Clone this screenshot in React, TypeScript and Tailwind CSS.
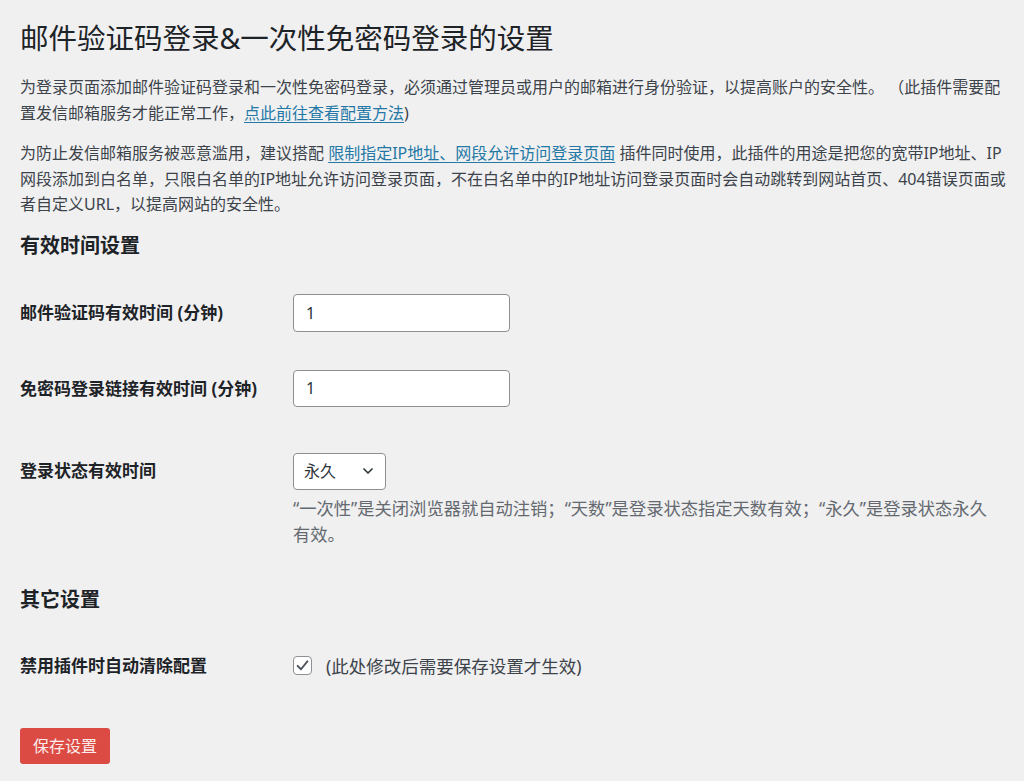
import { ChevronDown } from 'lucide-react';

const font = { fontFamily: '"Noto Sans", "Noto Sans CJK SC", sans-serif' };

const Link = ({ children }: { children: React.ReactNode }) => (
  <a href="#" className="text-[#2478a6] underline underline-offset-[3px] decoration-1">{children}</a>
);

export default function App() {
  return (
    <div style={font} className="min-h-[781px] bg-[#f0f0f1] px-[20px] pt-[20px] text-[#3c434a]">
      <h1 className="text-[28.5px] leading-[36px] font-normal text-[#1d2327] whitespace-nowrap">邮件验证码登录&amp;一次性免密码登录的设置</h1>

      <p className="mt-[19px] text-[16px] leading-[25.5px] whitespace-nowrap">
        <span className="block">为登录页面添加邮件验证码登录和一次性免密码登录，必须通过管理员或用户的邮箱进行身份验证，以提高账户的安全性。 （此插件需要配</span>
        <span className="block">置发信邮箱服务才能正常工作，<Link>点此前往查看配置方法</Link>)</span>
      </p>

      <p className="mt-[15px] text-[16px] leading-[25.5px] whitespace-nowrap">
        <span className="block">为防止发信邮箱服务被恶意滥用，建议搭配 <Link>限制指定IP地址、网段允许访问登录页面</Link> 插件同时使用，此插件的用途是把您的宽带IP地址、IP</span>
        <span className="block">网段添加到白名单，只限白名单的IP地址允许访问登录页面，不在白名单中的IP地址访问登录页面时会自动跳转到网站首页、404错误页面或</span>
        <span className="block">者自定义URL，以提高网站的安全性。</span>
      </p>

      <h2 className="mt-[14px] text-[20px] leading-[28px] font-bold text-[#1d2327]">有效时间设置</h2>

      <div className="mt-[34px] flex items-start">
        <label className="w-[273px] shrink-0 text-[17px] leading-[38px] font-bold text-[#1d2327]">邮件验证码有效时间 (分钟)</label>
        <input
          defaultValue="1"
          className="h-[38px] w-[217px] rounded-[4px] border border-[#8c8f94] bg-white px-[12px] text-[16px] text-[#2c3338] outline-none"
        />
      </div>

      <div className="mt-[38px] flex items-start">
        <label className="w-[273px] shrink-0 text-[17px] leading-[38px] font-bold text-[#1d2327]">免密码登录链接有效时间 (分钟)</label>
        <input
          defaultValue="1"
          className="h-[37px] w-[217px] rounded-[4px] border border-[#8c8f94] bg-white px-[12px] text-[16px] text-[#2c3338] outline-none"
        />
      </div>

      <div className="mt-[45px] flex items-start">
        <label className="w-[273px] shrink-0 text-[17px] leading-[36px] font-bold text-[#1d2327]">登录状态有效时间</label>
        <div>
          <div className="flex h-[37px] w-[93px] items-center justify-between rounded-[4px] border border-[#8c8f94] bg-white pl-[10px] pr-[9px] text-[16px] text-[#2c3338]">
            <span>永久</span>
            <ChevronDown size={16} strokeWidth={2.5} className="text-[#2c3338]" />
          </div>
          <p className="mt-[6px] text-[17.3px] leading-[26px] text-[#646970] whitespace-nowrap">
            <span className="block">“一次性”是关闭浏览器就自动注销；“天数”是登录状态指定天数有效；“永久”是登录状态永久</span>
            <span className="block">有效。</span>
          </p>
        </div>
      </div>

      <h2 className="mt-[38px] text-[20px] leading-[28px] font-bold text-[#1d2327]">其它设置</h2>

      <div className="mt-[39px] flex items-center">
        <label className="w-[273px] shrink-0 text-[17px] leading-[26px] font-bold text-[#1d2327]">禁用插件时自动清除配置</label>
        <span className="flex h-[19px] w-[19px] items-center justify-center rounded-[4px] border border-[#8c8f94] bg-white">
          <svg width="15" height="15" viewBox="0 0 20 20" fill="none">
            <path d="M3.5 10.5 L8 15 L16.5 4.5" stroke="#50575e" strokeWidth="2.6" strokeLinecap="round" strokeLinejoin="round" />
          </svg>
        </span>
        <span className="ml-[14px] text-[17.5px] leading-[26px]">(此处修改后需要保存设置才生效)</span>
      </div>

      <button className="mt-[49px] h-[36px] w-[90px] rounded-[3px] bg-[#dc4b43] text-[16px] text-[#fbeceb]">保存设置</button>
    </div>
  );
}
